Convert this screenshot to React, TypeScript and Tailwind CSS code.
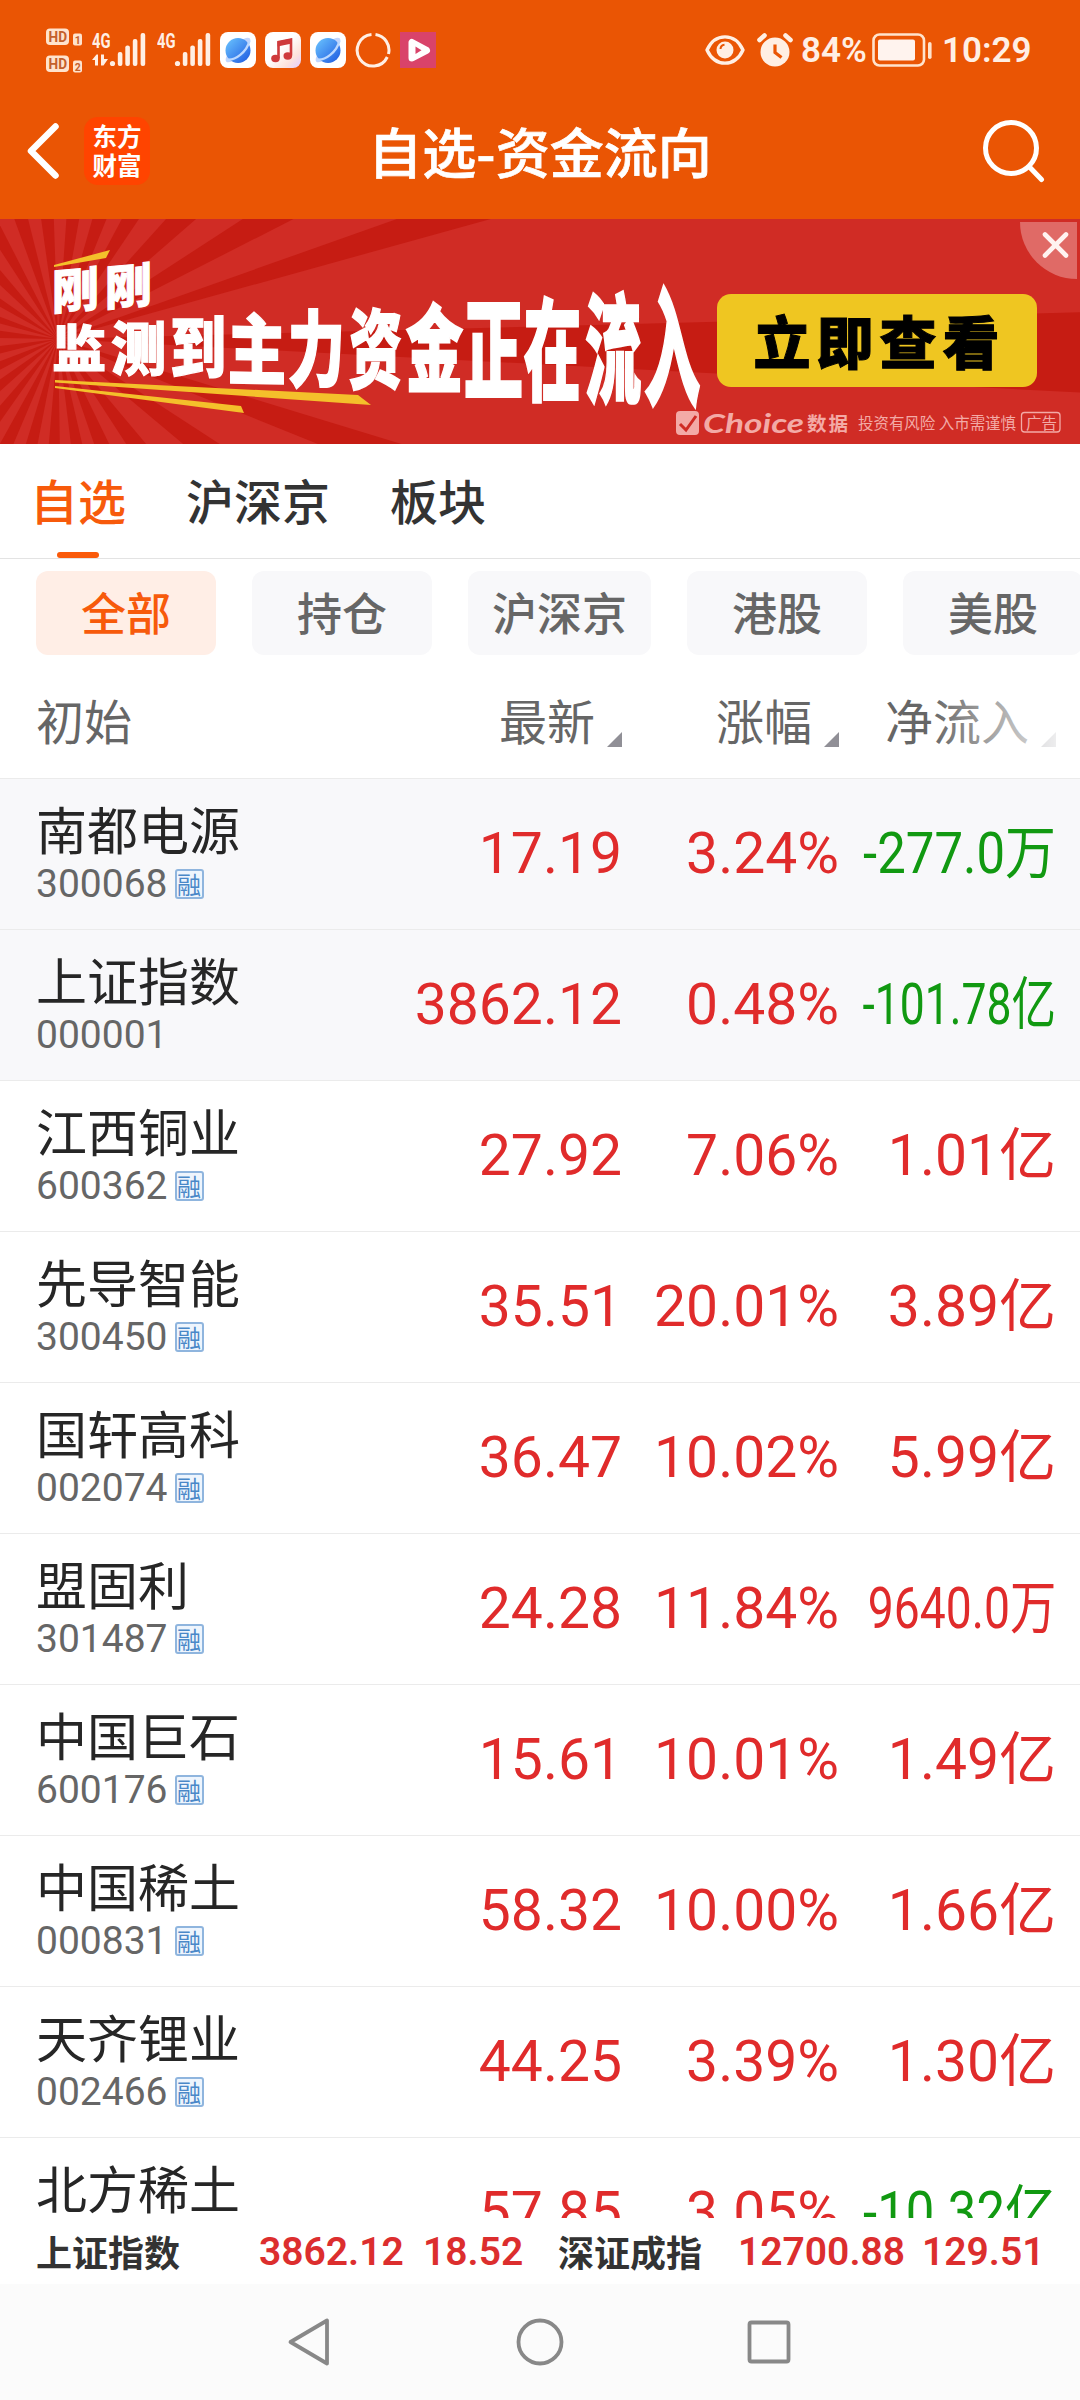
type Stock = {
  name: string;
  code?: string;
  price: string;
  change: string;
  flow: string;
  margin?: boolean;
  pinned?: boolean;
  // long amounts are squeezed horizontally to stay inside the column
  squeeze?: string;
};

const STOCKS: Stock[] = [
  { name: "南都电源", code: "300068", price: "17.19", change: "3.24%", flow: "-277.0万", margin: true, pinned: true, squeeze: "scale-x-[0.893]" },
  { name: "上证指数", code: "000001", price: "3862.12", change: "0.48%", flow: "-101.78亿", pinned: true, squeeze: "scale-x-[0.78]" },
  { name: "江西铜业", code: "600362", price: "27.92", change: "7.06%", flow: "1.01亿", margin: true },
  { name: "先导智能", code: "300450", price: "35.51", change: "20.01%", flow: "3.89亿", margin: true },
  { name: "国轩高科", code: "002074", price: "36.47", change: "10.02%", flow: "5.99亿", margin: true },
  { name: "盟固利", code: "301487", price: "24.28", change: "11.84%", flow: "9640.0万", margin: true, squeeze: "scale-x-[0.812]" },
  { name: "中国巨石", code: "600176", price: "15.61", change: "10.01%", flow: "1.49亿", margin: true },
  { name: "中国稀土", code: "000831", price: "58.32", change: "10.00%", flow: "1.66亿", margin: true },
  { name: "天齐锂业", code: "002466", price: "44.25", change: "3.39%", flow: "1.30亿", margin: true },
  { name: "北方稀土", price: "57.85", change: "3.05%", flow: "-10.32亿", squeeze: "scale-x-[0.893]" },
];

// one entry per character: left, top, width, height, slope
const HEADLINE: [string, number, number, number, number, number][] = [
  ["刚", 53, 49, 45, 46, -5],
  ["刚", 106, 45, 45, 46, -5],
  ["监", 53, 104, 52, 48, 0],
  ["测", 112, 100, 53, 56, 0],
  ["到", 171, 96, 54, 63, 0],
  ["主", 229, 92, 56, 74, 1],
  ["力", 289, 88, 55, 80, 0],
  ["资", 350, 87, 51, 84, 0],
  ["金", 407, 83, 55, 91, 0],
  ["正", 465, 76, 57, 105, 0],
  ["在", 525, 76, 55, 107, 0],
  ["流", 586, 71, 54, 115, 0],
  ["入", 645, 65, 54, 125, 0],
];

// [start, end] angles in degrees around the vanishing point
const RAYS: [number, number][] = [
  [-1.5, -15.5], [-19.5, -27], [-33, -41], [-48, -56], [-62, -68], [-74, -80], [-86, -92], [-98, -104],
  [-110, -117], [-123, -130], [-137, -145], [-151, -159], [-165, -172], [-179, -187], [-194, -201], [-208, -215],
  [-222, -229], [-235, -241], [-247, -253], [-259, -265], [-271, -277], [-283, -289], [-296, -303], [-310, -320],
  [-327, -338], [-343, -357],
];

function ray([a, b]: [number, number]) {
  const p = (deg: number) => {
    const r = (deg * Math.PI) / 180;
    return `${58 + Math.cos(r) * 1500},${120 + Math.sin(r) * 1500}`;
  };
  return `58,120 ${p(a)} ${p(b)}`;
}

function Signal({ data }: { data?: boolean }) {
  return (
    <svg className="h-[36px] w-[54px]" viewBox="0 0 54 36" fill="#ffefe4">
      <text x="0" y="15.5" fontSize="20" fontWeight="700" textLength="18.5" lengthAdjust="spacingAndGlyphs" fontFamily="Roboto">4G</text>
      {data && <path d="M0 28l4.500-5.500h1.500v11H3v-5.500zM9 22.500h3v4.500h4l-4.500 6.500H9z" />}
      <circle cx="20.500" cy="31.500" r="2.600" />
      <rect x="25.800" y="20" width="4.600" height="14" rx="2" />
      <rect x="33.300" y="13.500" width="4.600" height="20.500" rx="2" />
      <rect x="40.800" y="7" width="4.600" height="27" rx="2" />
      <rect x="48.600" y="1" width="4.600" height="33" rx="2" />
    </svg>
  );
}

function HdBadge({ n }: { n: string }) {
  return (
    <svg className="h-[18px] w-[36px]" viewBox="0 0 36 18">
      <rect x="0" y="0.500" width="23" height="16.500" rx="4" fill="#ffe3cd" />
      <text x="2.500" y="14" fontSize="15.500" fontWeight="700" textLength="18.500" lengthAdjust="spacingAndGlyphs" fontFamily="Roboto" fill="#c4602c">HD</text>
      <rect x="27" y="5.500" width="9" height="12" rx="2" fill="#ffe3cd" />
      <text x="28.700" y="15.500" fontSize="10.500" fontWeight="700" fontFamily="Roboto" fill="#c4602c">{n}</text>
    </svg>
  );
}

function Planet() {
  return (
    <svg className="size-[36px]" viewBox="0 0 36 36">
      <defs>
        <linearGradient id="globe" x1="0" y1="0" x2="1" y2="1">
          <stop offset="0" stopColor="#6cc6ff" />
          <stop offset="1" stopColor="#1d58e0" />
        </linearGradient>
      </defs>
      <rect width="36" height="36" rx="8" fill="#fff" />
      <ellipse cx="18" cy="18" rx="16.500" ry="5.500" transform="rotate(-45 18 18)" fill="#c3d4fb" />
      <circle cx="18" cy="18.500" r="12.500" fill="url(#globe)" />
      <path d="M6.500 27.500C15 29 27 20 29.500 8.500" fill="none" stroke="#bcd8ff" strokeWidth="2.400" />
    </svg>
  );
}

function StatusBar() {
  return (
    <div className="flex h-[98px] items-center pr-[50px] pl-[46px] pt-[2px]">
      <div className="flex flex-col gap-[9px]">
        <HdBadge n="1" />
        <HdBadge n="2" />
      </div>
      <div className="ml-[10px] flex items-center">
        <Signal data />
        <span className="w-[11px]" />
        <Signal />
      </div>
      <div className="ml-[9px] flex items-center gap-[9px]">
        <Planet />
        <svg className="size-[36px]" viewBox="0 0 36 36">
          <defs>
            <linearGradient id="music" x1="0" y1="0" x2="1" y2="1">
              <stop offset="0.450" stopColor="#fff" />
              <stop offset="0.750" stopColor="#fde3dd" />
              <stop offset="1" stopColor="#e3ccff" />
            </linearGradient>
          </defs>
          <rect width="36" height="36" rx="8" fill="url(#music)" />
          <path d="M13.500 26V10l12.500-2.500v16" fill="none" stroke="#cf3a3c" strokeWidth="2.600" />
          <path d="M12.500 9.500l14.500-3v5l-14.500 3z" fill="#cf3a3c" />
          <ellipse cx="10.500" cy="26.500" rx="4.300" ry="3.700" fill="#cf3a3c" />
          <ellipse cx="22.800" cy="24" rx="4.300" ry="3.700" fill="#cf3a3c" />
        </svg>
        <Planet />
        <svg className="size-[36px]" viewBox="0 0 36 36" fill="none" stroke="#ffefe4" strokeWidth="3">
          <path d="M20.500 2.500A15.800 15.800 0 0 1 33.500 22" />
          <path d="M32.300 25A15.800 15.800 0 1 1 16.500 2.500" />
        </svg>
        <svg className="size-[36px]" viewBox="0 0 36 36">
          <rect width="36" height="36" fill="#d9436a" />
          <path d="M12 10.500v15.500l14.500-7.700z" fill="#fff" stroke="#fff" strokeWidth="7" strokeLinejoin="round" />
          <path d="M15.500 14.500v7.500l6-3.800z" fill="#d9436a" />
        </svg>
      </div>
      <div className="ml-auto flex items-center font-[Roboto] text-[35px] leading-none font-semibold text-[#ffefe4]">
        <svg className="h-[32px] w-[40px]" viewBox="0 0 40 32">
          <path d="M2 16C10-1.500 30-1.500 38 16C30 33.500 10 33.500 2 16z" fill="none" stroke="#ffefe4" strokeWidth="3.400" strokeLinejoin="round" />
          <circle cx="20" cy="16" r="8.500" fill="#ffefe4" />
          <path d="M15.500 15a4.500 4.500 0 0 1 4-4.200" fill="none" stroke="#ea5504" strokeWidth="2" />
        </svg>
        <svg className="ml-[12px] h-[34px] w-[36px]" viewBox="0 0 36 34">
          <circle cx="18" cy="19" r="14.500" fill="#ffefe4" />
          <path d="M18 11.500v8l6.500 5" fill="none" stroke="#ea5504" strokeWidth="3.200" />
          <path d="M2.500 7l5-4.500M33.500 7l-5-4.500" stroke="#ffefe4" strokeWidth="4.600" strokeLinecap="round" />
        </svg>
        <span className="ml-[8px] w-[66px] whitespace-nowrap">84%</span>
        <svg className="ml-[5px] h-[34px] w-[62px]" viewBox="0 0 62 34">
          <rect x="1.500" y="1.500" width="50.500" height="31" rx="6" fill="none" stroke="#ffe3cd" strokeWidth="2.600" />
          <rect x="6" y="6.500" width="37" height="21" rx="2" fill="#fff3ee" />
          <rect x="56" y="9" width="3.600" height="17" rx="1.800" fill="#ffe3cd" />
        </svg>
        <span className="ml-[8px] w-[88px] whitespace-nowrap">10:29</span>
      </div>
    </div>
  );
}

function TitleBar() {
  return (
    <div className="grid h-[121px] grid-cols-[200px_1fr_200px] items-center pb-[15px]">
      <div className="flex items-center pl-[26px]">
        <svg className="h-[58px] w-[34px]" viewBox="0 0 34 58" fill="none" stroke="#fff" strokeWidth="6.500" strokeLinecap="round">
          <path d="M29.500 4.500L5 29l24.500 24.500" strokeLinejoin="round" />
        </svg>
        <div className="ml-[24px] flex h-[68px] w-[66px] flex-col items-center justify-center rounded-[14px] bg-[#ff4400] pb-[2px] text-[24.500px] leading-[29px] font-bold text-white">
          <span>东方</span>
          <span>财富</span>
        </div>
      </div>
      <h1 className="text-center text-[54px] leading-[60px] font-medium whitespace-nowrap text-white [-webkit-text-stroke:0.7px_white]">自选-资金流向</h1>
      <svg className="mr-[34px] h-[64px] w-[64px] justify-self-end" viewBox="0 0 64 64" fill="none" stroke="#fff" strokeWidth="5" strokeLinecap="round">
        <circle cx="29" cy="29" r="25.500" />
        <path d="M47.500 48l12 12.500" />
      </svg>
    </div>
  );
}

function Banner() {
  return (
    <svg className="block h-[225px] w-[1080px]" viewBox="0 0 1080 225" fontFamily='"Noto Sans CJK SC", sans-serif'>
      <rect width="1080" height="225" fill="#c61c13" />
      {RAYS.map((r) => (
        <polygon key={r[0]} points={ray(r)} fill="#d02c25" />
      ))}
      <polygon points="54,48 54,46 110,31 106,39" fill="#f4c02b" />
      <polygon points="55,161 358,176 371,186 55,163.500" fill="#f4c02b" />
      <polygon points="55,167 241,187 244,194 55,169" fill="#f4c02b" />
      <g fill="#fff" stroke="#fff" strokeWidth="2" fontSize="100" fontWeight="900">
        {HEADLINE.map(([ch, x, y, w, h, slope], i) => (
          <text key={i} x="-2" y="87" transform={`translate(${x} ${y}) skewY(${slope}) scale(${w / 96} ${h / 96})`}>
            {ch}
          </text>
        ))}
      </g>
      <rect x="717" y="75" width="320" height="93" rx="14" fill="#efc621" />
      <text x="753.500" y="145" fontSize="57" fontWeight="900" letterSpacing="6" stroke="#000" strokeWidth="1">立即查看</text>
      <g fill="#f3aaa6">
        <rect x="676" y="192" width="23" height="24" rx="4" />
        <path d="M680 205l6 6 10-14" fill="none" stroke="#cf2b24" strokeWidth="3" />
        <text x="703" y="213.500" fontSize="26" fontWeight="700" fontStyle="italic" textLength="101" lengthAdjust="spacingAndGlyphs" fontFamily="Lato">Choice</text>
        <text x="807" y="211.500" fontSize="19.500" fontWeight="700" letterSpacing="2">数据</text>
        <text x="858" y="209.500" fontSize="16" textLength="158" lengthAdjust="spacingAndGlyphs">投资有风险 入市需谨慎</text>
        <rect x="1021.500" y="193.500" width="38.500" height="19.500" rx="3" fill="none" stroke="#f3aaa6" strokeWidth="1.300" />
        <text x="1026" y="209.500" fontSize="15.500">广告</text>
      </g>
      <path d="M1020 3h57v57a57 57 0 0 1-57-57z" fill="#e06a66" />
      <path d="M1045 15.500l21 21M1066 15.500l-21 21" stroke="#fff3f1" strokeWidth="4.600" strokeLinecap="round" />
    </svg>
  );
}

function Tabs() {
  return (
    <nav className="flex h-[115px] gap-[60px] border-b border-[#e3e3e3] px-[30px] text-[48px] leading-[111px] font-medium text-[#333]">
      <div className="relative text-[#f75a0b]">
        自选
        <span className="absolute bottom-0 left-[27px] h-[6px] w-[42px] rounded-full bg-[#fa5a0a]" />
      </div>
      <div>沪深京</div>
      <div>板块</div>
    </nav>
  );
}

function Chips() {
  return (
    <div className="flex gap-[36px] overflow-hidden pt-[12px] pl-[36px] text-[45px] leading-[82px] font-medium text-[#666]">
      <span className="h-[84px] min-w-[180px] shrink-0 rounded-[12px] bg-[#ffeee6] text-center text-[#f75a0b]">全部</span>
      {["持仓", "沪深京", "港股", "美股"].map((c) => (
        <span key={c} className="h-[84px] min-w-[180px] shrink-0 rounded-[12px] bg-[#f8f8fa] px-[24px] text-center">
          {c}
        </span>
      ))}
    </div>
  );
}

function TableHead() {
  return (
    <div className="relative grid h-[124px] grid-cols-[405px_217px_217px_217px] border-b border-[#ebebeb] text-[48px] leading-[129px] text-[#666]">
      <div className="pl-[36px]">初始</div>
      {["最新", "涨幅", "净流入"].map((label) => (
        <div key={label} className="flex justify-end gap-[12px]">
          <span className="whitespace-nowrap">{label}</span>
          <svg className="mt-[77px] size-[15px]" viewBox="0 0 15 15">
            <path d="M15 0v15H0z" fill="#908f96" />
          </svg>
        </div>
      ))}
      <div className="absolute top-0 right-0 h-[120px] w-[150px] bg-linear-to-l from-white to-white/0" />
    </div>
  );
}

function Row({ s }: { s: Stock }) {
  return (
    <div className={`grid h-[151px] shrink-0 grid-cols-[405px_217px_217px_217px] items-center border-b border-[#ebebeb] font-[Roboto,'Noto_Sans_CJK_SC'] text-[57px] leading-[60px] text-[#e02b2b] ${s.pinned ? "bg-[#f8f8fa]" : "bg-white"}`}>
      <div className="self-start pt-[20px] pl-[36px]">
        <div className="font-['Noto_Sans_CJK_SC'] text-[51px] leading-[58px] text-[#262626]">{s.name}</div>
        {s.code && (
          <div className="mt-[7px] flex items-center text-[39px] leading-[40px] text-[#666]">
            {s.code}
            {s.margin && (
              <span className="mb-[1px] ml-[7px] h-[30px] w-[29px] rounded-[3px] border-2 border-[#8fb5de] bg-[#eef5fd] text-center font-['Noto_Sans_CJK_SC'] text-[24px] leading-[25px] text-[#4a88c8]">
                融
              </span>
            )}
          </div>
        )}
      </div>
      <div className="text-right">{s.price}</div>
      <div className="text-right">{s.change}</div>
      <div className={`flex justify-end whitespace-nowrap ${s.flow.startsWith("-") ? "text-[#119911]" : ""}`}>
        <span className={`origin-right ${s.squeeze ?? ""}`}>{s.flow}</span>
      </div>
    </div>
  );
}

function IndexQuote({ name, value, delta, nameWidth, valueWidth }: { name: string; value: string; delta: string; nameWidth: string; valueWidth: string }) {
  return (
    <div className="flex items-center">
      <span className={`font-bold text-[#333] ${nameWidth}`}>{name}</span>
      <span className={`pt-[2px] font-[Roboto] text-[39px] font-semibold text-[#dc2e2e] ${valueWidth}`}>{value}</span>
      <span className="pt-[2px] font-[Roboto] text-[39px] font-semibold text-[#dc2e2e]">{delta}</span>
    </div>
  );
}

function Ticker() {
  return (
    <div className="grid h-[66px] grid-cols-[522px_1fr] bg-white pl-[36px] text-[36px] leading-[40px] whitespace-nowrap">
      <IndexQuote name="上证指数" value="3862.12" delta="18.52" nameWidth="w-[223px]" valueWidth="w-[164px]" />
      <IndexQuote name="深证成指" value="12700.88" delta="129.51" nameWidth="w-[180px]" valueWidth="w-[184px]" />
    </div>
  );
}

function NavBar() {
  return (
    <div className="grid h-[116px] grid-cols-3 items-center bg-[#fbfbfb] px-[195px]">
      <svg className="ml-[90px] size-[50px] justify-self-start" viewBox="0 0 50 50" fill="none" stroke="#888" strokeWidth="3.800" strokeLinejoin="round">
        <path d="M42 3.500v43L5.500 25z" />
      </svg>
      <svg className="size-[50px] justify-self-center" viewBox="0 0 50 50" fill="none" stroke="#888" strokeWidth="3.800">
        <circle cx="25" cy="25" r="21.500" />
      </svg>
      <svg className="mr-[91px] size-[50px] justify-self-end" viewBox="0 0 50 50" fill="none" stroke="#888" strokeWidth="3.800">
        <rect x="5.500" y="5.500" width="39" height="39" rx="2" />
      </svg>
    </div>
  );
}

export default function App() {
  return (
    <div className="flex h-[2400px] w-[1080px] flex-col overflow-hidden bg-white font-['Noto_Sans_CJK_SC',sans-serif]">
      <header className="h-[219px] shrink-0 bg-[#ea5504]">
        <StatusBar />
        <TitleBar />
      </header>
      <Banner />
      <Tabs />
      <Chips />
      <TableHead />
      <main className="flex h-[1439px] shrink-0 flex-col overflow-hidden">
        {STOCKS.map((s) => (
          <Row key={s.name} s={s} />
        ))}
      </main>
      <Ticker />
      <NavBar />
    </div>
  );
}
